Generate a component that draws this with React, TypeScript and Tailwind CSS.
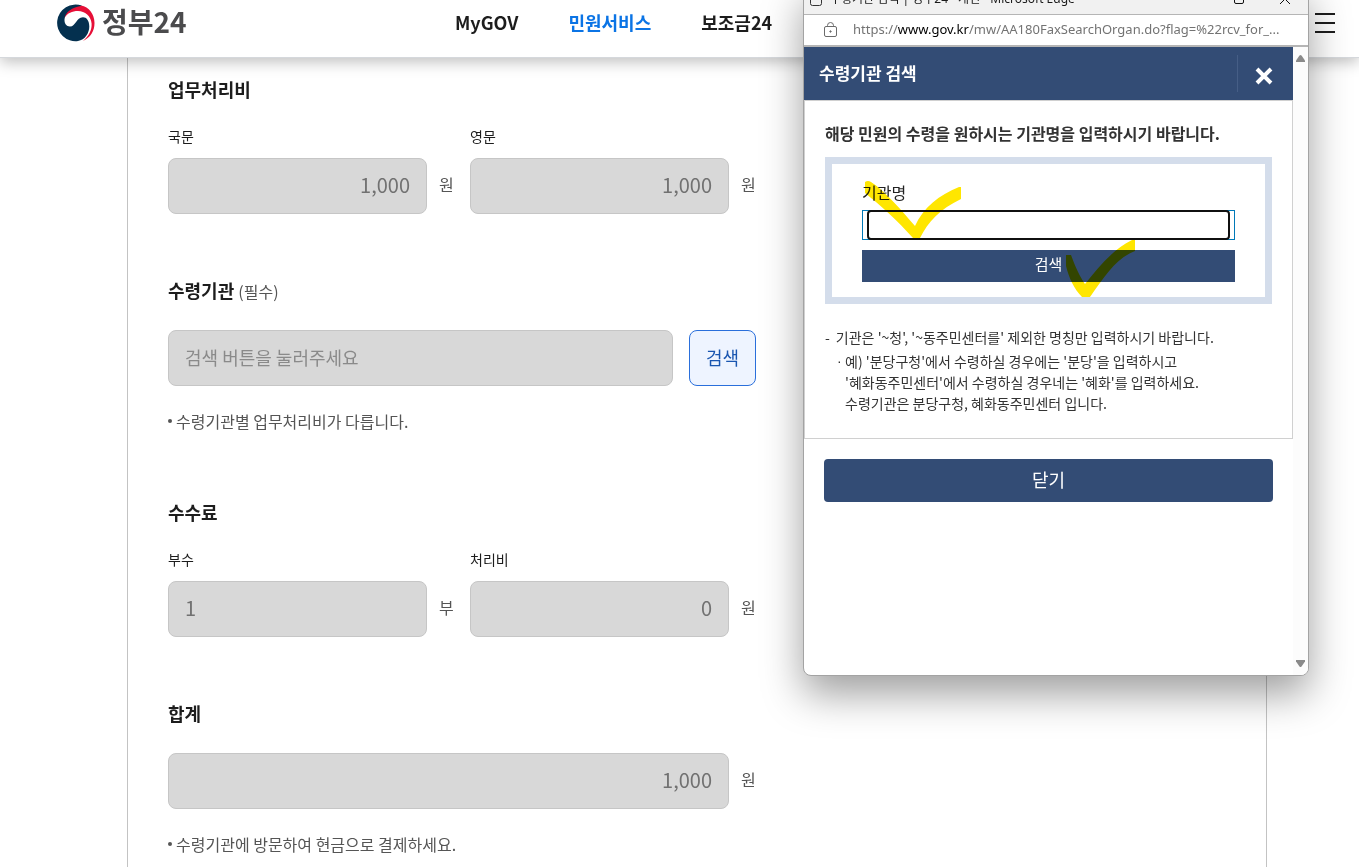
import React from "react";

const inputStyle =
  "h-14 w-full min-w-0 rounded-lg border border-[#c6c6c6] bg-[#d8d8d8] px-4 pb-[3px] text-[#717171] placeholder:text-[#8a8a8a]";

const GovLogo = () => (
  <svg width="38" height="38" viewBox="0 0 38 38" aria-hidden="true">
    <path
      fill="#e60f37"
      d="M6 12C10 5 17 1.500 24 1.500C32 3 37.500 10 37.500 19C37.500 27 33.500 33.500 26 37C32 32 35 26 34.600 19.500C34 12 28 7 21 7C15 7 10.500 9 7.500 14Z"
    />
    <path
      fill="#04304f"
      d="M25 1.800A18.300 18.300 0 1 0 21 37C28 36 32.300 29 32.300 22.500C32.300 16.500 29.500 13.200 26 13.200C19 13.200 19 22.500 13 22.500C9 22.500 7.300 19 7.500 15.500C7.800 8.500 15 3 25 1.800Z"
    />
  </svg>
);

type FieldProps = {
  id: string;
  label?: string;
  value: string;
  unit: string;
  align?: "left" | "right";
};

const Field = ({ id, label, value, unit, align = "right" }: FieldProps) => (
  <div className="min-w-0">
    {label && (
      <label htmlFor={id} className="mb-3 block text-sm leading-5 text-[#1d1d1d]">
        {label}
      </label>
    )}
    <div className="flex items-center gap-3">
      <input
        id={id}
        readOnly
        defaultValue={value}
        className={`${inputStyle} text-xl ${align === "right" ? "text-right" : "text-left"}`}
      />
      <span className="w-[15px] shrink-0 pb-1 text-base text-[#555]">{unit}</span>
    </div>
  </div>
);

const Note = ({ children }: { children: React.ReactNode }) => (
  <p className="mt-[23px] flex items-center gap-1 text-base leading-6 text-[#555]">
    <span className="size-1 shrink-0 rounded-full bg-[#555]" />
    {children}
  </p>
);

const Header = () => (
  <header className="relative flex h-[58px] items-center border-b border-[#d5d8dc] bg-white pr-6 pb-3 pl-[57px] shadow-[0_4px_14px_rgba(0,0,0,0.25)]">
    <div className="flex w-[398px] shrink-0">
      <a href="#home" className="flex items-center gap-[7px]">
        <GovLogo />
        <span className="pb-1 text-[28px] leading-9 font-bold text-[#4b4b4d]">정부24</span>
      </a>
    </div>
    <nav className="flex gap-[50px] pb-0.5 text-lg leading-7 font-bold whitespace-nowrap text-[#1d1d1d]">
      <a href="#mygov">MyGOV</a>
      <a href="#service" className="text-[#0b74e5]">
        민원서비스
      </a>
      <a href="#subsidy">보조금24</a>
    </nav>
    <button type="button" aria-label="전체메뉴" className="ml-auto flex w-5 flex-col gap-[7px]">
      <span className="h-[2px] bg-[#1d1d1d]" />
      <span className="h-[2px] bg-[#1d1d1d]" />
      <span className="h-[2px] bg-[#1d1d1d]" />
    </button>
  </header>
);

const FeeForm = () => (
  <main className="mr-[92px] ml-[127px] grow border-x border-[#c3c3c3] pt-[17px] pb-[9px] pl-10">
    <form className="max-w-[588px]">
      <section>
        <h2 className="mb-[23px] text-lg leading-7 font-bold text-[#1d1d1d]">업무처리비</h2>
        <div className="grid grid-cols-2 gap-4">
          <Field id="fee-ko" label="국문" value="1,000" unit="원" />
          <Field id="fee-en" label="영문" value="1,000" unit="원" />
        </div>
      </section>

      <section className="mt-[62px]">
        <h2 className="mb-[26px] text-lg leading-7 font-bold text-[#1d1d1d]">
          <label htmlFor="organ">
            수령기관 <span className="text-base font-normal text-[#555]">(필수)</span>
          </label>
        </h2>
        <div className="flex gap-4">
          <input
            id="organ"
            readOnly
            placeholder="검색 버튼을 눌러주세요"
            className={`${inputStyle} text-lg`}
          />
          <button
            type="button"
            className="h-14 w-[67px] shrink-0 rounded-lg border border-[#2a6fdb] bg-[#eef4ff] pb-[3px] text-lg text-[#1a56b0]"
          >
            검색
          </button>
        </div>
        <Note>수령기관별 업무처리비가 다릅니다.</Note>
      </section>

      <section className="mt-[65px]">
        <h2 className="mb-[23px] text-lg leading-7 font-bold text-[#1d1d1d]">수수료</h2>
        <div className="grid grid-cols-2 gap-4">
          <Field id="copies" label="부수" value="1" unit="부" align="left" />
          <Field id="handling" label="처리비" value="0" unit="원" />
        </div>
      </section>

      <section className="mt-[62px]">
        <h2 className="mb-[26px] text-lg leading-7 font-bold text-[#1d1d1d]">
          <label htmlFor="total">합계</label>
        </h2>
        <Field id="total" value="1,000" unit="원" />
        <Note>수령기관에 방문하여 현금으로 결제하세요.</Note>
      </section>
    </form>
  </main>
);

const TitleBar = () => (
  <div className="flex h-[31px] items-center border-b border-[#b5b5b5] bg-[#f1f1f1] pr-[18px] pl-1.5 text-xs text-[#1a1a1a]">
    <svg width="12" height="14" viewBox="0 0 12 14" fill="none" stroke="#333" aria-hidden="true">
      <rect x="0.500" y="0.500" width="11" height="13" rx="2" />
    </svg>
    <span className="ml-2 font-['Noto_Sans','Noto_Sans_CJK_KR',sans-serif] whitespace-nowrap">
      수령기관 검색 | 정부24 - 개인 - Microsoft Edge
    </span>
    <button type="button" aria-label="최대화" className="ml-auto">
      <svg width="10" height="10" viewBox="0 0 10 10" fill="none" stroke="#111">
        <rect x="0.500" y="0.500" width="9" height="9" rx="1.500" />
      </svg>
    </button>
    <button type="button" aria-label="창 닫기" className="ml-9">
      <svg width="10" height="10" viewBox="0 0 10 10" fill="none" stroke="#111">
        <path d="M0 0L10 10M10 0L0 10" />
      </svg>
    </button>
  </div>
);

const AddressBar = () => (
  <div className="flex h-8 items-center gap-4 border-b-2 border-[#b5b5b5] bg-white pr-3 pl-5">
    <svg width="13" height="16" viewBox="0 0 13 16" fill="none" stroke="#6b6b6b" className="shrink-0" aria-hidden="true">
      <rect x="0.500" y="4.500" width="12" height="10" rx="1.500" />
      <path d="M3.500 4.500V3.500a3 3 0 0 1 6 0V4.500" />
      <circle cx="6.500" cy="9.500" r="0.700" fill="#6b6b6b" />
    </svg>
    <span className="truncate font-['Noto_Sans',sans-serif] text-[13px] text-[#737373]">
      https://<span className="text-black">www.gov.kr</span>/mw/AA180FaxSearchOrgan.do?flag=%22rcv_for_...
    </span>
  </div>
);

// highlighter ticks over the organ name field and the search button
const Ticks = () => (
  <svg
    width="447"
    height="147"
    viewBox="0 0 447 147"
    fill="#ffe600"
    className="pointer-events-none absolute -top-[7px] -left-[7px] mix-blend-multiply"
    aria-hidden="true"
  >
    <path d="M40 25Q43 23 46 25C60 34 77 54 90 69C98 51 114 38 134 30H136V42C115 52 103 65 95 81H88C72 63 55 48 40 36Z" />
    <path d="M241 98H246C250 109 255 120 260 127C272 112 288 92 307 83H310V94C292 101 281 117 265 140H257C249 132 244 121 241 109Z" />
  </svg>
);

const OrganSearch = () => (
  <div className="min-w-0 grow">
    <div className="flex h-[53px] items-stretch bg-[#334c75] text-white">
      <h1 className="grow pt-3 pl-[15px] text-[17px] leading-7 font-bold">수령기관 검색</h1>
      <button
        type="button"
        aria-label="닫기"
        className="my-2 flex w-14 items-center justify-center border-l border-[#465e86] pt-1 pr-1"
      >
        <svg width="18" height="18" viewBox="0 0 18 18" fill="none" stroke="#fff" strokeWidth="4">
          <path d="M2 2L16 16M16 2L2 16" />
        </svg>
      </button>
    </div>

    <div className="border border-[#d0d0d0] px-5 pt-5 pb-6">
      <p className="text-base leading-6 font-bold whitespace-nowrap text-[#333]">
        해당 민원의 수령을 원하시는 기관명을 입력하시기 바랍니다.
      </p>
      <div className="relative mt-3 border-[7px] border-[#d4ddeb] px-[30px] pt-4 pb-[15px]">
        <label htmlFor="organ-name" className="block text-base leading-6 text-[#222]">
          기관명
        </label>
        <div className="mt-1.5 h-[30px] border border-[#0079b8] px-1">
          <input
            id="organ-name"
            className="-my-px block h-[30px] w-full rounded border-2 border-[#101010] bg-white px-2 text-sm outline-none"
          />
        </div>
        <button
          type="button"
          className="mt-[10px] block h-8 w-full bg-[#334c75] pb-[3px] text-[15px] text-white"
        >
          검색
        </button>
        <Ticks />
      </div>
      <ul className="mt-[23px] text-sm leading-[21px] text-[#333]">
        <li className="flex gap-1.5">
          <span>-</span>
          <p>기관은 '~청', '~동주민센터를' 제외한 명칭만 입력하시기 바랍니다.</p>
        </li>
        <li className="mt-[3px] flex gap-1 pl-3">
          <span className="w-1 shrink-0 text-center font-['Liberation_Sans',sans-serif]">·</span>
          <p>
            예) '분당구청'에서 수령하실 경우에는 '분당'을 입력하시고
            <br />
            '혜화동주민센터'에서 수령하실 경우네는 '혜화'를 입력하세요.
            <br />
            수령기관은 분당구청, 혜화동주민센터 입니다.
          </p>
        </li>
      </ul>
    </div>

    <div className="px-5 pt-5">
      <button
        type="button"
        className="h-[43px] w-full rounded bg-[#334c75] pb-[3px] text-lg text-white"
      >
        닫기
      </button>
    </div>
  </div>
);

const PopupWindow = () => (
  <div className="absolute -top-[17px] right-[50px] flex h-[693px] w-[506px] flex-col overflow-hidden rounded-lg border border-[#a3a3a3] bg-white shadow-[0_18px_40px_rgba(0,0,0,0.38)]">
    <TitleBar />
    <AddressBar />
    <div className="flex grow">
      <OrganSearch />
      <div className="flex w-[15px] shrink-0 flex-col items-center justify-between bg-[#fcfcfc] py-2">
        <svg width="9" height="7" viewBox="0 0 9 7" fill="#8a8a8a" aria-hidden="true">
          <path d="M3.500 0.500Q4.500 -0.500 5.500 0.500L9 5.500V7H0V5.500Z" />
        </svg>
        <svg width="9" height="7" viewBox="0 0 9 7" fill="#8a8a8a" aria-hidden="true">
          <path d="M3.500 6.500Q4.500 7.500 5.500 6.500L9 1.500V0H0V1.500Z" />
        </svg>
      </div>
    </div>
  </div>
);

export default function App() {
  return (
    <div className="relative flex min-h-screen flex-col overflow-hidden bg-white font-['Noto_Sans_CJK_KR',sans-serif]">
      <Header />
      <FeeForm />
      <PopupWindow />
    </div>
  );
}
